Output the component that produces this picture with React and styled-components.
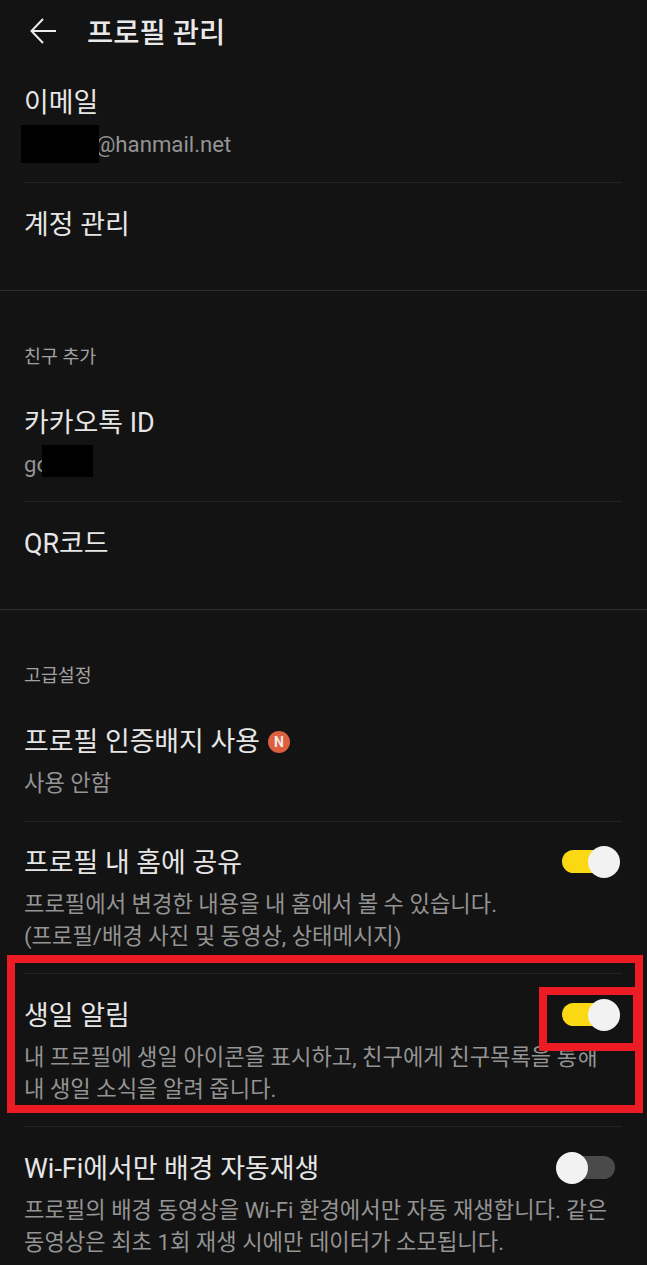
import React from "react";
import styled, { createGlobalStyle } from "styled-components";

const GlobalStyle = createGlobalStyle`
  html, body {
    margin: 0;
    padding: 0;
    background: #131313;
  }
  body {
    font-family: Roboto, "Noto Sans CJK KR", sans-serif;
  }
`;

const Page = styled.div`
  position: relative;
  width: 647px;
  height: 1265px;
  overflow: hidden;
  background: #131313;
`;

const Header = styled.header`
  display: flex;
  align-items: center;
  height: 60px;
  padding-left: 29px;
  gap: 30px;
`;

const BackButton = styled.svg`
  width: 28px;
  height: 28px;
  flex: none;
`;

const Title = styled.h1`
  margin: 0;
  font-size: 28.5px;
  font-weight: 500;
  color: #e9e9e9;
`;

const Section = styled.section`
  border-bottom: ${(p) => (p.$last ? "none" : "1px solid #2e2e2e")};
`;

const SectionLabel = styled.div`
  height: ${(p) => p.$h}px;
  padding: 0 24px;
  display: flex;
  align-items: flex-end;
  font-size: 18.4px;
  line-height: 24px;
  color: #a2a2a2;
`;

const Row = styled.div`
  position: relative;
  box-sizing: border-box;
  height: ${(p) => p.$h}px;
  margin: 0 25px 0 24px;
  padding-top: ${(p) => p.$top}px;
  border-bottom: ${(p) => (p.$plain ? "none" : "1px solid #232323")};
`;

const RowTitle = styled.div`
  display: flex;
  align-items: center;
  gap: 8px;
  height: 36px;
  font-size: 26.9px;
  line-height: 36px;
  color: #e6e6e6;
  white-space: nowrap;
`;

const RowText = styled.div`
  margin-top: 7px;
  font-size: 22.2px;
  line-height: 32px;
  color: #949494;
  white-space: nowrap;
`;

const NewBadge = styled.span`
  display: inline-flex;
  align-items: center;
  justify-content: center;
  width: 22px;
  height: 22px;
  border-radius: 50%;
  background: #dc5f3f;
  color: #f4e9e4;
  font-size: 14px;
  font-weight: 700;
  line-height: 1;
`;

const Track = styled.span`
  position: absolute;
  right: ${(p) => (p.$on ? 3 : 7)}px;
  top: ${(p) => p.$y}px;
  width: ${(p) => (p.$on ? 57 : 54)}px;
  height: 23px;
  border-radius: 12px;
  background: ${(p) => (p.$on ? "#fad814" : "#4a4a4a")};
`;

const Knob = styled.span`
  position: absolute;
  top: -4px;
  ${(p) => (p.$on ? "right: -1px;" : "left: -5px;")}
  width: 32px;
  height: 32px;
  border-radius: 50%;
  background: #f2f2f2;
`;

const Mask = styled.div`
  position: absolute;
  left: ${(p) => p.$x}px;
  top: ${(p) => p.$y}px;
  width: ${(p) => p.$w}px;
  height: ${(p) => p.$h}px;
  background: #000;
`;

const RedBox = styled.div`
  position: absolute;
  box-sizing: border-box;
  left: ${(p) => p.$x}px;
  top: ${(p) => p.$y}px;
  width: ${(p) => p.$w}px;
  height: ${(p) => p.$h}px;
  border: 8px solid #ed1c24;
`;

function Toggle({ on, y }) {
  return (
    <Track $on={on} $y={y}>
      <Knob $on={on} />
    </Track>
  );
}

export default function App() {
  return (
    <Page>
      <GlobalStyle />
      <Header>
        <BackButton viewBox="0 0 28 28" fill="none" stroke="#ececec" strokeWidth="2">
          <path d="M27 15H3M14 3 2.5 15 14 27" />
        </BackButton>
        <Title>프로필 관리</Title>
      </Header>

      <Section>
        <Row $h={123} $top={25}>
          <RowTitle>이메일</RowTitle>
          <RowText>xxxxxxi@hanmail.net</RowText>
        </Row>
        <Row $h={107} $top={24} $plain>
          <RowTitle>계정 관리</RowTitle>
        </Row>
      </Section>

      <Section>
        <SectionLabel $h={78}>친구 추가</SectionLabel>
        <Row $h={133} $top={36}>
          <RowTitle>카카오톡 ID</RowTitle>
          <RowText>go</RowText>
        </Row>
        <Row $h={107} $top={24} $plain>
          <RowTitle>QR코드</RowTitle>
        </Row>
      </Section>

      <Section $last>
        <SectionLabel $h={78}>고급설정</SectionLabel>
        <Row $h={134} $top={36}>
          <RowTitle>
            프로필 인증배지 사용
            <NewBadge>N</NewBadge>
          </RowTitle>
          <RowText>사용 안함</RowText>
        </Row>
        <Row $h={152} $top={23}>
          <RowTitle>프로필 내 홈에 공유</RowTitle>
          <Toggle on y={28} />
          <RowText>
            프로필에서 변경한 내용을 내 홈에서 볼 수 있습니다.
            <br />
            (프로필/배경 사진 및 동영상, 상태메시지)
          </RowText>
        </Row>
        <Row $h={153} $top={24}>
          <RowTitle>생일 알림</RowTitle>
          <Toggle on y={29} />
          <RowText>
            내 프로필에 생일 아이콘을 표시하고, 친구에게 친구목록을 통해
            <br />
            내 생일 소식을 알려 줍니다.
          </RowText>
        </Row>
        <Row $h={139} $top={24} $plain>
          <RowTitle>Wi-Fi에서만 배경 자동재생</RowTitle>
          <Toggle y={29} />
          <RowText>
            프로필의 배경 동영상을 Wi-Fi 환경에서만 자동 재생합니다. 같은
            <br />
            동영상은 최초 1회 재생 시에만 데이터가 소모됩니다.
          </RowText>
        </Row>
      </Section>

      <Mask $x={21} $y={125} $w={78} $h={38} />
      <Mask $x={42} $y={445} $w={51} $h={32} />
      <RedBox $x={7} $y={955} $w={636} $h={158} />
      <RedBox $x={539} $y={987} $w={102} $h={64} />
    </Page>
  );
}
